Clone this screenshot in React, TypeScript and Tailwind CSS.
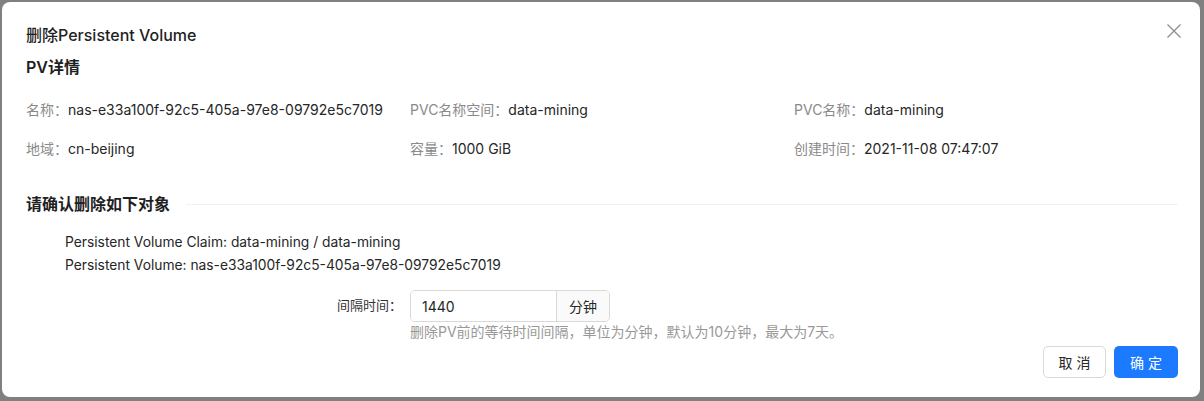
const font = { fontFamily: '"Inter", "Noto Sans CJK SC", sans-serif' };

const details = [
  { label: "名称：", value: "nas-e33a100f-92c5-405a-97e8-09792e5c7019" },
  { label: "PVC名称空间：", value: "data-mining" },
  { label: "PVC名称：", value: "data-mining" },
  { label: "地域：", value: "cn-beijing" },
  { label: "容量：", value: "1000 GiB" },
  { label: "创建时间：", value: "2021-11-08 07:47:07" },
];

const DeletePV = () => {
  return (
    <div
      className="w-[1204px] h-[401px] bg-[#808080] pl-[2px] pr-[4px] pb-[4px] flex flex-col overflow-hidden"
      style={font}
    >
      <div className="h-[2px] overflow-hidden pl-[44px]">
        <div className="-mt-[19px] text-[22px] leading-[22px] font-semibold text-[#2e2e2e]">
          Persistent Volume
        </div>
      </div>

      <div className="flex-1 bg-white rounded-[8px] pl-6 pr-[22px] pt-[23px] flex flex-col relative">
        <button className="absolute right-[18px] top-[21px]">
          <svg width="16" height="16" viewBox="0 0 16 16" fill="none">
            <path d="M1.5 1.5L14.5 14.5M14.5 1.5L1.5 14.5" stroke="#8c8c8c" strokeWidth="1.3" />
          </svg>
        </button>

        <h2 className="text-[16px] leading-[20px] font-medium text-[#1f1f1f]">
          删除Persistent Volume
        </h2>

        <h3 className="mt-[11px] text-[16px] leading-[22px] font-semibold text-[#1f1f1f]">
          PV详情
        </h3>

        <div className="mt-[22px] grid grid-cols-3 gap-y-[19px] text-[14px] leading-[20px]">
          {details.map((d) => (
            <div key={d.label} className="whitespace-nowrap">
              <span className="text-[#8a8a8a]">{d.label}</span>
              <span className="text-[#262626]">{d.value}</span>
            </div>
          ))}
        </div>

        <div className="mt-[33px] flex items-center gap-4">
          <h3 className="text-[16px] leading-[24px] font-semibold text-[#1f1f1f] whitespace-nowrap">
            请确认删除如下对象
          </h3>
          <div className="flex-1 h-px bg-[#f0f0f0]" />
        </div>

        <div className="mt-[15px] pl-[39px] text-[13.8px] leading-[23px] text-[#262626]">
          <div>Persistent Volume Claim: data-mining / data-mining</div>
          <div>Persistent Volume: nas-e33a100f-92c5-405a-97e8-09792e5c7019</div>
        </div>

        <div className="mt-[13px] grid grid-cols-3">
          <div className="h-8 flex items-center justify-end pr-[8px] text-[13px] text-[#333]">
            间隔时间：
          </div>
          <div className="col-span-2">
            <div className="flex w-[200px] h-8 border border-[#d9d9d9] rounded-[5px] overflow-hidden text-[14px]">
              <input
                defaultValue="1440"
                className="flex-1 min-w-0 px-[11px] outline-none text-[#262626] bg-white"
                style={font}
              />
              <div className="w-[53px] border-l border-[#d9d9d9] bg-[#fafafa] flex items-center justify-center text-[#262626]">
                分钟
              </div>
            </div>
            <div className="text-[14px] leading-[20px] text-[#999]">
              删除PV前的等待时间间隔，单位为分钟，默认为10分钟，最大为7天。
            </div>
          </div>
        </div>

        <div className="mt-1 flex justify-end gap-2">
          <button className="h-8 w-[63px] border border-[#d9d9d9] rounded-[5px] text-[14px] text-[#262626] bg-white tracking-[4px] pl-[4px]">
            取消
          </button>
          <button className="h-8 w-[64px] rounded-[5px] text-[14px] text-white bg-[#1b7aff] tracking-[4px] pl-[4px]">
            确定
          </button>
        </div>
      </div>
    </div>
  );
};

export default function App() {
  return <DeletePV />;
}
